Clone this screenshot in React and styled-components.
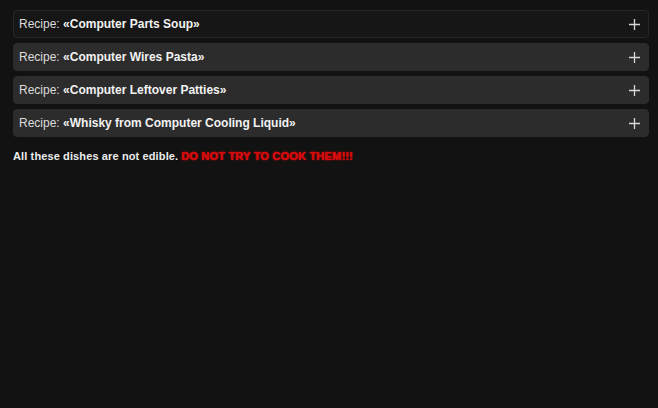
import React, { useState } from "react";
import styled, { createGlobalStyle } from "styled-components";

const GlobalStyle = createGlobalStyle`
  html, body {
    margin: 0;
    background: #121212;
  }
  body {
    font-family: "Liberation Sans", Arial, sans-serif;
    color: #e6e6e6;
  }
`;

const Page = styled.div`
  padding: 10px 9px 0 13px;
  display: flex;
  flex-direction: column;
  gap: 5px;
`;

const Item = styled.div`
  background: ${(props) => (props.hovered ? "#161616" : "#2c2c2c")};
  border: 1px solid ${(props) => (props.hovered ? "#262626" : "#2c2c2c")};
  border-radius: 4px;
  height: 26px;
  display: flex;
  align-items: center;
  justify-content: space-between;
  padding: 0 8px 0 5px;
  font-size: 12px;
  color: #dcdcdc;
  cursor: pointer;
`;

const Title = styled.span`
  margin-top: -1px;
  b {
    color: #f2f2f2;
  }
`;

const Plus = styled.svg`
  width: 11px;
  height: 11px;
  stroke: #d8d8d8;
  stroke-width: 1.3;
`;

const Note = styled.p`
  margin: 8px 0 0;
  font-size: 11px;
  letter-spacing: 0.12px;
  font-weight: bold;
  color: #ececec;
`;

const Warning = styled.span`
  color: #d40a0a;
  font-size: 11px;
  letter-spacing: 0.2px;
  text-shadow: 0 0 1px #ff1a1a, 0 0 2px #a00000;
`;

const recipes = [
  "Computer Parts Soup",
  "Computer Wires Pasta",
  "Computer Leftover Patties",
  "Whisky from Computer Cooling Liquid",
];

const App = () => {
  const [hovered, setHovered] = useState(0);

  return (
    <Page>
      <GlobalStyle />
      {recipes.map((name, i) => (
        <Item key={name} hovered={hovered === i} onMouseEnter={() => setHovered(i)}>
          <Title>
            Recipe: <b>«{name}»</b>
          </Title>
          <Plus viewBox="0 0 11 11">
            <path d="M5.5 0v11M0 5.5h11" />
          </Plus>
        </Item>
      ))}
      <Note>
        All these dishes are not edible. <Warning>DO NOT TRY TO COOK THEM!!!</Warning>
      </Note>
    </Page>
  );
};

export default App;
